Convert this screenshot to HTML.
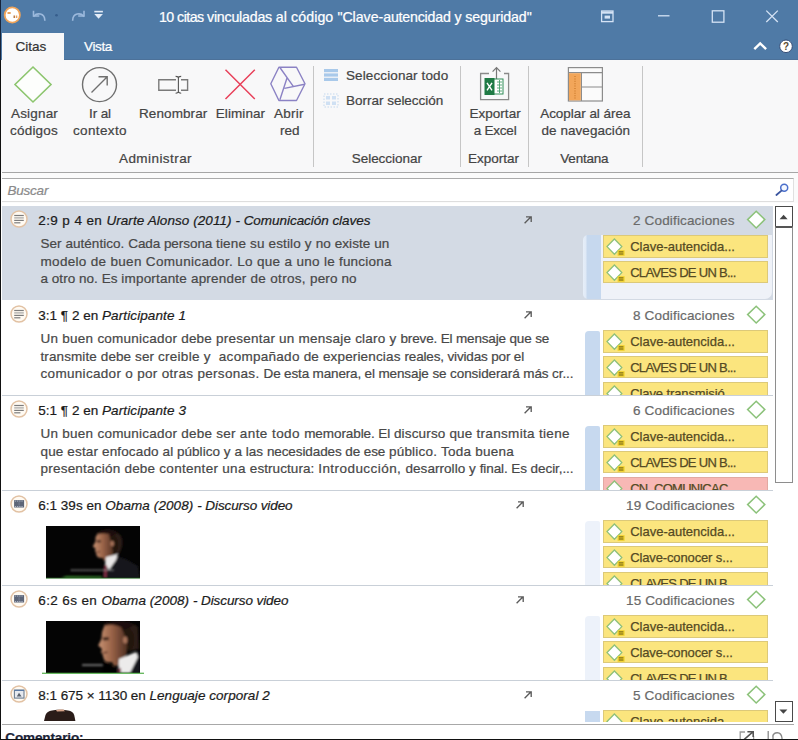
<!DOCTYPE html>
<html><head><meta charset="utf-8"><title>citas</title>
<style>
*{box-sizing:border-box;margin:0;padding:0}
html,body{width:798px;height:740px;overflow:hidden;background:#fff;font-family:"Liberation Sans",sans-serif;}
body{position:relative}
.a{position:absolute}
.t{position:absolute;white-space:pre;-webkit-text-stroke:0.22px currentColor}
svg{position:absolute;overflow:visible}
.sep{position:absolute;width:1.2px;background:#c6c6c6;top:66px;height:101px}
.tag{position:absolute;left:603px;width:165px;height:22.2px;background:#fbe57e;border:1px solid #dcc979;overflow:hidden}
.tag.red{background:#f8b8b5;border-color:#e2a9a2}
.tt{position:absolute;white-space:nowrap;-webkit-text-stroke:0.25px currentColor;font-size:13px;line-height:15px;color:#544a24;left:26.3px}
</style></head><body>

<div class="a" style="left:0;top:0;width:798px;height:60px;background:#4f7aa6"></div>
<div class="a" style="left:64px;top:59px;width:734px;height:1px;background:#4c7199"></div>
<div class="a" style="left:0;top:60px;width:798px;height:112px;background:#f8f8f9"></div>
<div class="a" style="left:2px;top:33px;width:62px;height:28px;background:#f8f8f9"></div>
<div class="a" style="left:0;top:0;width:1.2px;height:740px;background:#16233a"></div>
<div class="a" style="left:0;top:60px;width:1.3px;height:680px;background:#111"></div>
<!-- title bar icons -->
<svg style="left:0;top:0" width="798" height="60" viewBox="0 0 798 60">
  <circle cx="12.3" cy="15" r="7.6" fill="#fff" stroke="#f0a45a" stroke-width="1.8"/>
  <rect x="7.5" y="12" width="3.2" height="2" fill="#e9a25c"/>
  <rect x="13.5" y="15.5" width="1.5" height="2.5" fill="#b77a48"/>
  <rect x="15.8" y="15.5" width="1.5" height="2.5" fill="#e9a25c"/>
  <g fill="none" stroke="#9cb9dc" stroke-width="1.6" stroke-linecap="square">
    <path d="M33.5 11.5 V16 H38.5"/><path d="M34 16 C37 12.5 44.5 13 44.8 20"/>
    <path d="M84 11.5 V16 H79"/><path d="M83.5 16 C80.5 12.5 73 13 72.7 20"/>
  </g>
  <circle cx="56.5" cy="15.2" r="1.3" fill="#365d8c"/>
  <rect x="94.3" y="10.8" width="8.6" height="1.6" fill="#e3ecf7"/>
  <path d="M94.3 14 H102.9 L98.6 18.8 Z" fill="#e3ecf7"/>
  <!-- window controls -->
  <g fill="none" stroke="#d5e3f5" stroke-width="1.3">
    <rect x="601.6" y="11" width="11.4" height="10.6"/>
    <path d="M601.6 12.6 H613" stroke-width="2.2"/>
    <rect x="604.6" y="15.6" width="5.4" height="3" fill="#d5e3f5" stroke="none"/>
    <path d="M658 15.8 H669.5"/>
    <rect x="712.3" y="10.8" width="11.6" height="11.4"/>
    <path d="M766.3 10.6 L777.8 22 M777.8 10.6 L766.3 22"/>
  </g>
  <path d="M754.3 49.2 L760.2 43.4 L766.1 49.2" fill="none" stroke="#fff" stroke-width="2.4"/>
  <circle cx="786" cy="46.3" r="6.3" fill="#fff" stroke="#2c446e" stroke-width="0.9"/>
  <text x="786" y="50" font-family="Liberation Sans" font-weight="bold" font-size="10" text-anchor="middle" fill="#5a4a30">?</text>
</svg>
<!-- ribbon icons -->
<svg style="left:0;top:60px" width="798" height="112" viewBox="0 60 798 112">
  <!-- diamond -->
  <path d="M33 67 L51 84.5 L33 102 L15 84.5 Z" fill="#fdfefc" stroke="#8cc56e" stroke-width="1.6"/>
  <!-- circle arrow -->
  <circle cx="99.5" cy="84.6" r="17" fill="none" stroke="#6f6f6f" stroke-width="1.4"/>
  <path d="M91.5 92.5 L107 77 M98.5 76.8 H107.2 V85.5" fill="none" stroke="#6f6f6f" stroke-width="1.4"/>
  <!-- rename -->
  <g fill="none" stroke="#7a7a7a" stroke-width="1.4">
    <path d="M176 79.8 H158.8 V90.3 H176 M181 79.8 H187.6 V90.3 H181"/>
    <path d="M178.4 77 V92.6 M175.6 76.4 Q178.4 76.4 178.4 78 Q178.4 76.4 181.2 76.4 M175.6 93.2 Q178.4 93.2 178.4 91.6 Q178.4 93.2 181.2 93.2" stroke="#555" stroke-width="1.1"/>
  </g>
  <!-- X -->
  <path d="M225.5 69.8 L254.8 99 M254.8 69.8 L225.5 99" fill="none" stroke="#e8405a" stroke-width="1.5"/>
  <!-- hexagon -->
  <g fill="none" stroke="#8b82c4" stroke-width="1.4" stroke-linejoin="round">
    <path d="M270.8 83.8 L278.9 67.2 H296.5 L305 83.8 L296.5 100.5 H278.9 Z"/>
    <path d="M279.9 67.5 L293.1 86.1 M287 78 L279.9 99.8 M304.6 84.3 L284.5 88.4"/>
  </g>
  <!-- select all -->
  <rect x="324" y="69" width="14" height="3.2" fill="#a9c9ea"/>
  <rect x="324" y="73.4" width="14" height="3.2" fill="#a9c9ea"/>
  <rect x="324" y="77.8" width="14" height="3.2" fill="#a9c9ea"/>
  <!-- clear selection -->
  <g fill="#cfe0f3">
    <rect x="324" y="94" width="14" height="13" fill="none" stroke="#c4d8ee" stroke-width="1" stroke-dasharray="1.5 1.5"/>
    <rect x="326" y="96" width="4" height="3.5"/><rect x="332" y="96" width="4" height="3.5"/>
    <rect x="326" y="101.5" width="4" height="3.5"/><rect x="332" y="101.5" width="4" height="3.5"/>
  </g>
  <!-- excel -->
  <g>
    <path d="M489 73.5 H480.6 V99.6 H508.6 V73.5 H504" fill="none" stroke="#8a8a8a" stroke-width="1.3"/>
    <path d="M496.5 80 V68 M492.6 71.6 L496.5 67.6 L500.4 71.6" fill="none" stroke="#777" stroke-width="1.2"/>
    <rect x="493" y="79" width="10" height="15" fill="#fff" stroke="#2e8b57" stroke-width="1"/>
    <path d="M497 82 H502 M497 85 H502 M497 88 H502 M497 91 H502 M499.5 80 V93" stroke="#4aa06e" stroke-width="0.9"/>
    <rect x="484.5" y="78" width="10" height="17" fill="#1f7a45"/>
    <path d="M487 82.8 L492 90.4 M492 82.8 L487 90.4" stroke="#fff" stroke-width="1.4"/>
  </g>
  <!-- dock -->
  <g>
    <rect x="568.4" y="67.6" width="34" height="33.4" fill="#fbfbfb" stroke="#8c8c8c" stroke-width="1.2"/>
    <path d="M568.4 72.6 H602.4 M581.4 72.6 V101 M581.4 87 H602.4" stroke="#8c8c8c" stroke-width="1.2" fill="none"/>
    <rect x="569" y="73.2" width="11.8" height="27.2" fill="#f2a65a"/>
    <path d="M575 76 V99" stroke="#d98a3c" stroke-width="2" stroke-dasharray="1 1.4"/>
  </g>
</svg>

<div class="sep" style="left:312.5px"></div>
<div class="sep" style="left:459.5px"></div>
<div class="sep" style="left:528.2px"></div>
<div class="sep" style="left:641.7px"></div>
<div class="a" style="left:2px;top:171.6px;width:796px;height:1px;background:#a6a6a6"></div>
<div class="a" style="left:2px;top:172.6px;width:796px;height:30px;background:#fbfbfb"></div>
<div class="a" style="left:2px;top:177.8px;width:792px;height:24px;background:#fff;border-top:1.2px solid #ababab;border-right:1px solid #e0e0e0;border-bottom:1px solid #dedede"></div>
<div class="a" style="left:2px;top:206px;width:771px;height:94px;background:#d3dae4"></div>
<div class="a" style="left:2px;top:395px;width:771px;height:1px;background:#c9d0d8"></div>
<div class="a" style="left:2px;top:490px;width:771px;height:1px;background:#c9d0d8"></div>
<div class="a" style="left:2px;top:585px;width:771px;height:1px;background:#c9d0d8"></div>
<div class="a" style="left:2px;top:680px;width:771px;height:1px;background:#c9d0d8"></div>
<svg style="left:0;top:0" width="798" height="740" viewBox="0 0 798 740">
<circle cx="19" cy="219" r="8" fill="#fffaf2" stroke="#e2c2a4" stroke-width="1.5"/><g stroke="#7d7d7d" stroke-width="1.2"><path d="M14.2 215.5 H23.8"/><path d="M14.2 217.9 H23.8" stroke="#a5a5a5"/><path d="M14.2 220.4 H23.8"/><path d="M14.2 222.8 H20.4"/></g>
<path d="M756.2 211.2 L764.8000000000001 219.6 L756.2 228.0 L747.6 219.6 Z" fill="#fff" stroke="#8cc27a" stroke-width="1.5" stroke-linejoin="miter"/>
<circle cx="19" cy="314" r="8" fill="#fffaf2" stroke="#e2c2a4" stroke-width="1.5"/><g stroke="#7d7d7d" stroke-width="1.2"><path d="M14.2 310.5 H23.8"/><path d="M14.2 312.9 H23.8" stroke="#a5a5a5"/><path d="M14.2 315.4 H23.8"/><path d="M14.2 317.8 H20.4"/></g>
<path d="M756.2 306.20000000000005 L764.8000000000001 314.6 L756.2 323.0 L747.6 314.6 Z" fill="#fff" stroke="#8cc27a" stroke-width="1.5" stroke-linejoin="miter"/>
<circle cx="19" cy="409" r="8" fill="#fffaf2" stroke="#e2c2a4" stroke-width="1.5"/><g stroke="#7d7d7d" stroke-width="1.2"><path d="M14.2 405.5 H23.8"/><path d="M14.2 407.9 H23.8" stroke="#a5a5a5"/><path d="M14.2 410.4 H23.8"/><path d="M14.2 412.8 H20.4"/></g>
<path d="M756.2 401.20000000000005 L764.8000000000001 409.6 L756.2 418.0 L747.6 409.6 Z" fill="#fff" stroke="#8cc27a" stroke-width="1.5" stroke-linejoin="miter"/>
<circle cx="19" cy="504" r="8" fill="#fffaf2" stroke="#e2c2a4" stroke-width="1.5"/><rect x="14.1" y="500.1" width="10" height="7.4" fill="#5d6577"/><path d="M14.8 501.1 H23.6 M14.8 506.5 H23.6" stroke="#aab1c2" stroke-width="1" stroke-dasharray="1.3 0.9"/><path d="M19.1 502.2 V505.6" stroke="#7f879a" stroke-width="0.8"/>
<path d="M756.2 496.20000000000005 L764.8000000000001 504.6 L756.2 513.0 L747.6 504.6 Z" fill="#fff" stroke="#8cc27a" stroke-width="1.5" stroke-linejoin="miter"/>
<circle cx="19" cy="599" r="8" fill="#fffaf2" stroke="#e2c2a4" stroke-width="1.5"/><rect x="14.1" y="595.1" width="10" height="7.4" fill="#5d6577"/><path d="M14.8 596.1 H23.6 M14.8 601.5 H23.6" stroke="#aab1c2" stroke-width="1" stroke-dasharray="1.3 0.9"/><path d="M19.1 597.2 V600.6" stroke="#7f879a" stroke-width="0.8"/>
<path d="M756.2 591.2 L764.8000000000001 599.6 L756.2 608.0 L747.6 599.6 Z" fill="#fff" stroke="#8cc27a" stroke-width="1.5" stroke-linejoin="miter"/>
<circle cx="19" cy="694" r="8" fill="#fffaf2" stroke="#e2c2a4" stroke-width="1.5"/><rect x="14.4" y="690.1" width="9.6" height="8" fill="#e6e9ef" stroke="#6d7d90" stroke-width="1.1"/><path d="M14.4 690.4 H24" stroke="#5b7aa5" stroke-width="1.2"/><path d="M16.8 696.6 L19 692.8 L20.4 694.8 L21.6 696.6 Z" fill="#59606c"/>
<path d="M756.2 686.2 L764.8000000000001 694.6 L756.2 703.0 L747.6 694.6 Z" fill="#fff" stroke="#8cc27a" stroke-width="1.5" stroke-linejoin="miter"/>
<path d="M524.6 223.3 L530.8000000000001 217.10000000000002 M526.0 216.8 H531.2 V221.9" fill="none" stroke="#5c5c5c" stroke-width="1.35"/>
<path d="M524.6 318.3 L530.8000000000001 312.1 M526.0 311.8 H531.2 V316.90000000000003" fill="none" stroke="#5c5c5c" stroke-width="1.35"/>
<path d="M524.6 413.3 L530.8000000000001 407.1 M526.0 406.8 H531.2 V411.90000000000003" fill="none" stroke="#5c5c5c" stroke-width="1.35"/>
<path d="M516.6 508.3 L522.8000000000001 502.1 M518.0 501.8 H523.2 V506.90000000000003" fill="none" stroke="#5c5c5c" stroke-width="1.35"/>
<path d="M516.6 603.3 L522.8000000000001 597.0999999999999 M518.0 596.8 H523.2 V601.9" fill="none" stroke="#5c5c5c" stroke-width="1.35"/>
<path d="M524.6 698.3 L530.8000000000001 692.0999999999999 M526.0 691.8 H531.2 V696.9" fill="none" stroke="#5c5c5c" stroke-width="1.35"/>
</svg>
<div class="a" style="left:582.5px;top:235.4px;width:18.5px;height:64.1px;border-radius:5px 0 0 5px;background:linear-gradient(90deg,#e6eef8 0,#dfe9f6 3px,#c6d8ee 4px,#c6d8ee 100%)"></div>
<div class="a" style="left:601px;top:235.4px;width:171px;height:64.1px;background:#eff2f8;border-radius:0 0 7px 0"></div>
<div class="a" style="left:601px;top:235.4px;width:172px;height:64.1px;overflow:hidden">
<div class="tag" style="left:1.9px;top:0.0px"><div class="tt" style="top:2.6px;letter-spacing:0.0px">Clave-autencida...</div><svg style="left:0;top:0" width="26" height="22" viewBox="0 0 26 22"><path d="M10.4 3.0 L17.8 10.6 L10.4 18.2 L3.0 10.6 Z" fill="#fff" stroke="#8fc07a" stroke-width="1.3" stroke-linejoin="miter"/><rect x="13.6" y="14.2" width="7" height="5.6" fill="#f0d22a"/><path d="M14.8 15.9 H19.4 M14.8 18 H19.4" stroke="#6a5a18" stroke-width="1"/></svg></div>
<div class="tag" style="left:1.9px;top:25.9px"><div class="tt" style="top:2.6px;letter-spacing:-0.71px">CLAVES DE UN B...</div><svg style="left:0;top:0" width="26" height="22" viewBox="0 0 26 22"><path d="M10.4 3.0 L17.8 10.6 L10.4 18.2 L3.0 10.6 Z" fill="#fff" stroke="#8fc07a" stroke-width="1.3" stroke-linejoin="miter"/><rect x="13.6" y="14.2" width="7" height="5.6" fill="#f0d22a"/><path d="M14.8 15.9 H19.4 M14.8 18 H19.4" stroke="#6a5a18" stroke-width="1"/></svg></div>
</div>
<div class="a" style="left:584.8px;top:331.0px;width:15.6px;height:64.00000000000003px;border-radius:4px 2px 0 0;background:#c7d9ef"></div>
<div class="a" style="left:601px;top:330.4px;width:172px;height:64.60000000000002px;overflow:hidden">
<div class="tag" style="left:1.9px;top:0.0px"><div class="tt" style="top:2.6px;letter-spacing:0.0px">Clave-autencida...</div><svg style="left:0;top:0" width="26" height="22" viewBox="0 0 26 22"><path d="M10.4 3.0 L17.8 10.6 L10.4 18.2 L3.0 10.6 Z" fill="#fff" stroke="#8fc07a" stroke-width="1.3" stroke-linejoin="miter"/><rect x="13.6" y="14.2" width="7" height="5.6" fill="#f0d22a"/><path d="M14.8 15.9 H19.4 M14.8 18 H19.4" stroke="#6a5a18" stroke-width="1"/></svg></div>
<div class="tag" style="left:1.9px;top:25.9px"><div class="tt" style="top:2.6px;letter-spacing:-0.71px">CLAVES DE UN B...</div><svg style="left:0;top:0" width="26" height="22" viewBox="0 0 26 22"><path d="M10.4 3.0 L17.8 10.6 L10.4 18.2 L3.0 10.6 Z" fill="#fff" stroke="#8fc07a" stroke-width="1.3" stroke-linejoin="miter"/><rect x="13.6" y="14.2" width="7" height="5.6" fill="#f0d22a"/><path d="M14.8 15.9 H19.4 M14.8 18 H19.4" stroke="#6a5a18" stroke-width="1"/></svg></div>
<div class="tag" style="left:1.9px;top:51.8px"><div class="tt" style="top:2.6px;letter-spacing:-0.1px">Clave transmisió...</div><svg style="left:0;top:0" width="26" height="22" viewBox="0 0 26 22"><path d="M10.4 3.0 L17.8 10.6 L10.4 18.2 L3.0 10.6 Z" fill="#fff" stroke="#8fc07a" stroke-width="1.3" stroke-linejoin="miter"/><rect x="13.6" y="14.2" width="7" height="5.6" fill="#f0d22a"/><path d="M14.8 15.9 H19.4 M14.8 18 H19.4" stroke="#6a5a18" stroke-width="1"/></svg></div>
</div>
<div class="a" style="left:584.8px;top:426.0px;width:15.6px;height:64.00000000000003px;border-radius:4px 2px 0 0;background:#c7d9ef"></div>
<div class="a" style="left:601px;top:425.4px;width:172px;height:64.60000000000002px;overflow:hidden">
<div class="tag" style="left:1.9px;top:0.0px"><div class="tt" style="top:2.6px;letter-spacing:0.0px">Clave-autencida...</div><svg style="left:0;top:0" width="26" height="22" viewBox="0 0 26 22"><path d="M10.4 3.0 L17.8 10.6 L10.4 18.2 L3.0 10.6 Z" fill="#fff" stroke="#8fc07a" stroke-width="1.3" stroke-linejoin="miter"/><rect x="13.6" y="14.2" width="7" height="5.6" fill="#f0d22a"/><path d="M14.8 15.9 H19.4 M14.8 18 H19.4" stroke="#6a5a18" stroke-width="1"/></svg></div>
<div class="tag" style="left:1.9px;top:25.9px"><div class="tt" style="top:2.6px;letter-spacing:-0.71px">CLAVES DE UN B...</div><svg style="left:0;top:0" width="26" height="22" viewBox="0 0 26 22"><path d="M10.4 3.0 L17.8 10.6 L10.4 18.2 L3.0 10.6 Z" fill="#fff" stroke="#8fc07a" stroke-width="1.3" stroke-linejoin="miter"/><rect x="13.6" y="14.2" width="7" height="5.6" fill="#f0d22a"/><path d="M14.8 15.9 H19.4 M14.8 18 H19.4" stroke="#6a5a18" stroke-width="1"/></svg></div>
<div class="tag red" style="left:1.9px;top:51.8px"><div class="tt" style="top:2.6px;letter-spacing:-0.73px">CN_COMUNICAC...</div><svg style="left:0;top:0" width="26" height="22" viewBox="0 0 26 22"><path d="M10.4 3.0 L17.8 10.6 L10.4 18.2 L3.0 10.6 Z" fill="#fff" stroke="#8fc07a" stroke-width="1.3" stroke-linejoin="miter"/><rect x="13.6" y="14.2" width="7" height="5.6" fill="#f0d22a"/><path d="M14.8 15.9 H19.4 M14.8 18 H19.4" stroke="#6a5a18" stroke-width="1"/></svg></div>
</div>
<div class="a" style="left:584.8px;top:521.0px;width:15.6px;height:64.00000000000003px;border-radius:4px 2px 0 0;background:#edf2fa"></div>
<div class="a" style="left:601px;top:520.4px;width:172px;height:64.60000000000002px;overflow:hidden">
<div class="tag" style="left:1.9px;top:0.0px"><div class="tt" style="top:2.6px;letter-spacing:0.0px">Clave-autencida...</div><svg style="left:0;top:0" width="26" height="22" viewBox="0 0 26 22"><path d="M10.4 3.0 L17.8 10.6 L10.4 18.2 L3.0 10.6 Z" fill="#fff" stroke="#8fc07a" stroke-width="1.3" stroke-linejoin="miter"/><rect x="13.6" y="14.2" width="7" height="5.6" fill="#f0d22a"/><path d="M14.8 15.9 H19.4 M14.8 18 H19.4" stroke="#6a5a18" stroke-width="1"/></svg></div>
<div class="tag" style="left:1.9px;top:25.9px"><div class="tt" style="top:2.6px;letter-spacing:-0.13px">Clave-conocer s...</div><svg style="left:0;top:0" width="26" height="22" viewBox="0 0 26 22"><path d="M10.4 3.0 L17.8 10.6 L10.4 18.2 L3.0 10.6 Z" fill="#fff" stroke="#8fc07a" stroke-width="1.3" stroke-linejoin="miter"/><rect x="13.6" y="14.2" width="7" height="5.6" fill="#f0d22a"/><path d="M14.8 15.9 H19.4 M14.8 18 H19.4" stroke="#6a5a18" stroke-width="1"/></svg></div>
<div class="tag" style="left:1.9px;top:51.8px"><div class="tt" style="top:2.6px;letter-spacing:-0.71px">CLAVES DE UN B...</div><svg style="left:0;top:0" width="26" height="22" viewBox="0 0 26 22"><path d="M10.4 3.0 L17.8 10.6 L10.4 18.2 L3.0 10.6 Z" fill="#fff" stroke="#8fc07a" stroke-width="1.3" stroke-linejoin="miter"/><rect x="13.6" y="14.2" width="7" height="5.6" fill="#f0d22a"/><path d="M14.8 15.9 H19.4 M14.8 18 H19.4" stroke="#6a5a18" stroke-width="1"/></svg></div>
</div>
<div class="a" style="left:584.8px;top:616.0px;width:15.6px;height:64.00000000000003px;border-radius:4px 2px 0 0;background:#edf2fa"></div>
<div class="a" style="left:601px;top:615.4px;width:172px;height:64.60000000000002px;overflow:hidden">
<div class="tag" style="left:1.9px;top:0.0px"><div class="tt" style="top:2.6px;letter-spacing:0.0px">Clave-autencida...</div><svg style="left:0;top:0" width="26" height="22" viewBox="0 0 26 22"><path d="M10.4 3.0 L17.8 10.6 L10.4 18.2 L3.0 10.6 Z" fill="#fff" stroke="#8fc07a" stroke-width="1.3" stroke-linejoin="miter"/><rect x="13.6" y="14.2" width="7" height="5.6" fill="#f0d22a"/><path d="M14.8 15.9 H19.4 M14.8 18 H19.4" stroke="#6a5a18" stroke-width="1"/></svg></div>
<div class="tag" style="left:1.9px;top:25.9px"><div class="tt" style="top:2.6px;letter-spacing:-0.13px">Clave-conocer s...</div><svg style="left:0;top:0" width="26" height="22" viewBox="0 0 26 22"><path d="M10.4 3.0 L17.8 10.6 L10.4 18.2 L3.0 10.6 Z" fill="#fff" stroke="#8fc07a" stroke-width="1.3" stroke-linejoin="miter"/><rect x="13.6" y="14.2" width="7" height="5.6" fill="#f0d22a"/><path d="M14.8 15.9 H19.4 M14.8 18 H19.4" stroke="#6a5a18" stroke-width="1"/></svg></div>
<div class="tag" style="left:1.9px;top:51.8px"><div class="tt" style="top:2.6px;letter-spacing:-0.71px">CLAVES DE UN B...</div><svg style="left:0;top:0" width="26" height="22" viewBox="0 0 26 22"><path d="M10.4 3.0 L17.8 10.6 L10.4 18.2 L3.0 10.6 Z" fill="#fff" stroke="#8fc07a" stroke-width="1.3" stroke-linejoin="miter"/><rect x="13.6" y="14.2" width="7" height="5.6" fill="#f0d22a"/><path d="M14.8 15.9 H19.4 M14.8 18 H19.4" stroke="#6a5a18" stroke-width="1"/></svg></div>
</div>
<div class="a" style="left:584.8px;top:711.0px;width:15.6px;height:11.000000000000023px;border-radius:0;background:#c7d9ef"></div>
<div class="a" style="left:601px;top:710.4px;width:172px;height:11.600000000000023px;overflow:hidden">
<div class="tag" style="left:1.9px;top:0.0px"><div class="tt" style="top:2.6px;letter-spacing:0.0px">Clave-autencida...</div><svg style="left:0;top:0" width="26" height="22" viewBox="0 0 26 22"><path d="M10.4 3.0 L17.8 10.6 L10.4 18.2 L3.0 10.6 Z" fill="#fff" stroke="#8fc07a" stroke-width="1.3" stroke-linejoin="miter"/><rect x="13.6" y="14.2" width="7" height="5.6" fill="#f0d22a"/><path d="M14.8 15.9 H19.4 M14.8 18 H19.4" stroke="#6a5a18" stroke-width="1"/></svg></div>
</div>
<svg style="left:42px;top:525.5px;overflow:hidden" width="102" height="54" viewBox="-4 0 102 54"><defs><filter id="bl1" filterUnits="userSpaceOnUse" x="-4" y="-2" width="102" height="58"><feGaussianBlur stdDeviation="1"/></filter><linearGradient id="sk1" x1="0" x2="1" y1="0" y2="0"><stop offset="0" stop-color="#c99374"/><stop offset="0.45" stop-color="#9a6448"/><stop offset="1" stop-color="#4a2c20"/></linearGradient><clipPath id="cp1"><rect width="94" height="52"/></clipPath></defs><rect width="94" height="52" fill="#040404"/><g clip-path="url(#cp1)"><g filter="url(#bl1)"><path d="M70 30 L80 33 L92 40 L94 52 L56 52 L58 40 Z" fill="#15151a"/><path d="M52 7 C58 3 70 3 75 10 C78 16 76 23 73 28 L66 30 L62 14 Z" fill="#2a1a14"/><path d="M52 7 C56 5 63 6 66 10 L69 18 L68 26 L64 34 L58 35 L57 32 C53 32.5 51 31 50.5 29 L50 26.5 L49 24.5 L49.6 22.5 L46.8 20.5 L49.5 15.5 L49.6 11 Z" fill="url(#sk1)"/><path d="M63 9 C68 8 72 12 72 18 C72 23 70 27 68 30 C66 26 67 20 65 16 Z" fill="#24160f"/><ellipse cx="66.2" cy="17.5" rx="1.8" ry="2.8" fill="#a8735a"/><path d="M50.5 14.2 L54.5 14 L55 16.2 L51 16.4 Z" fill="#3a2018"/><path d="M50.6 25.4 L54 25 L54 26.2 L51 26.6 Z" fill="#5a3024"/><path d="M51 6.5 C57 2 68 2.5 72 7 L66 10 C62 7 56 7 52 8.5 Z" fill="#1c110c"/><path d="M60 31 L72 28 L70 34 L63 44 L59 38 Z" fill="#e8e6e6"/><path d="M58.4 39 L60.8 39 L60.4 52 L58.2 52 Z" fill="#8e3348"/></g><g filter="url(#bl1)"><path d="M25 44.2 H68" stroke="#b0b0b0" stroke-width="1.5" stroke-dasharray="2.2 0.9" opacity="0.8"/><path d="M15 52 L20 50.2 L56 50.6 L56 52 Z" fill="#3c9a32"/></g></g><rect x="0" y="51.7" width="94" height="0.9" fill="#2f6f2a"/></svg>
<svg style="left:42px;top:620.5px;overflow:hidden" width="102" height="54" viewBox="-4 0 102 54"><defs><filter id="bl2" filterUnits="userSpaceOnUse" x="-4" y="-2" width="102" height="58"><feGaussianBlur stdDeviation="1"/></filter><linearGradient id="sk2" x1="0" x2="1" y1="0" y2="0"><stop offset="0" stop-color="#c99374"/><stop offset="0.45" stop-color="#9a6448"/><stop offset="1" stop-color="#4a2c20"/></linearGradient><clipPath id="cp2"><rect width="94" height="52"/></clipPath></defs><rect width="94" height="52" fill="#040404"/><g clip-path="url(#cp2)"><g filter="url(#bl2)"><path d="M86 34 L94 30 L94 52 L80 52 Z" fill="#15151a"/><path d="M59 3 C66 -1 84 -1 92 6 L93 28 L84 30 L78 12 Z" fill="#2b1a13"/><path d="M59 3 C64 1 74 3 78 8 L82 20 L81 32 L76 44 L68 45 L66 41 C61 42 58 40 57.5 37 L56.6 33.5 L55 31 L56 28 L52.2 24.5 L55.4 18 L56 11 Z" fill="url(#sk2)"/><path d="M75 6 C82 5 88 10 88 18 C88 24 86 28 84 31 C81 27 81 20 79 15 Z" fill="#24160f"/><ellipse cx="79.2" cy="19" rx="2.2" ry="3.6" fill="#a8735a"/><path d="M56.5 16.4 L62.5 16 L63 19 L57.4 19.4 Z" fill="#3a2018"/><path d="M56.4 31.2 L61.5 30.4 L61.5 32 L57 32.6 Z" fill="#5a3024"/><path d="M58 2.5 C66 -2 82 -1 88 4 L79 9 C74 4 64 3 59 5 Z" fill="#1c110c"/><path d="M73 38 L90 31 L92 36 L84 52 L72 52 Z" fill="#ecebeb"/><path d="M72 47 L75 47 L75 52 L72 52 Z" fill="#7a4050"/><path d="M58 40 C62 44 70 46 72 52 L56 52 Z" fill="#050505"/></g><g filter="url(#bl2)"><path d="M36.5 44.2 H56.5" stroke="#c4c4c4" stroke-width="1.7" stroke-dasharray="2.2 0.8" opacity="0.85"/></g></g><rect x="-4" y="51.7" width="102" height="1.1" fill="#46a83c"/></svg>
<svg style="left:43px;top:709px" width="34" height="13" viewBox="0 0 34 13"><path d="M1 12 L2.5 6 Q4 2.5 9 1.6 L14 0.8 L20 0.8 L25 1.6 Q30 2.5 31.2 6 L32.4 12 Z" fill="#2a1c18"/><path d="M13 1.2 L16 0.4 L20.4 0.6 L22 2.2 L14 2.6 Z" fill="#d9a58a"/></svg>
<div class="a" style="left:774.5px;top:206px;width:18px;height:21px;background:#fff;border:1.6px solid #4a4a4a"></div>
<div class="a" style="left:774.5px;top:226px;width:18px;height:257px;background:#fff;border:1.8px solid #8e8e8e;border-top:2px solid #555"></div>
<div class="a" style="left:774.5px;top:700.5px;width:18px;height:21px;background:#fff;border:1.6px solid #4a4a4a"></div>
<svg style="left:774px;top:200px" width="20" height="530" viewBox="774 200 20 530"><path d="M779.6 219.2 L783.6 214.8 L787.6 219.2 Z" fill="#444"/><path d="M779.4 709.4 L783.4 713.8 L787.4 709.4 Z" fill="#444"/></svg>
<div class="a" style="left:2px;top:722px;width:796px;height:18px;background:#fff"></div>
<div class="a" style="left:2px;top:723.6px;width:792px;height:1px;background:#a8a8a8"></div>
<!-- search icon -->
<svg style="left:770px;top:180px" width="24" height="20" viewBox="770 180 24 20">
  <circle cx="784.2" cy="187.8" r="3.5" fill="#f4f8ff" stroke="#4a6fcb" stroke-width="1.5"/>
  <path d="M781.5 190.6 L776.4 195" stroke="#3a559f" stroke-width="1.8" stroke-linecap="round"/>
</svg>
<svg style="left:730px;top:728px" width="64" height="12" viewBox="730 728 64 12">
  <path d="M745 732 H740.2 V740 M753.6 736 V740" fill="none" stroke="#9a9a9a" stroke-width="1.3"/>
  <path d="M743.5 740 L752.6 732.2 M747.4 731.8 H753.2 V737" fill="none" stroke="#555" stroke-width="1.6"/>
  <path d="M768.2 731 V740" stroke="#8a8a8a" stroke-width="1.3"/>
  <path d="M773 734.5 V740 M772.6 736.6 C774 731.5 781 731 782 738 V740" fill="none" stroke="#8a8a8a" stroke-width="1.3"/>
</svg>

<div class="t" id="t0" style="left:159px;top:9.68px;font-size:14.2px;line-height:14.2px;color:#fff;letter-spacing:-0.538px;">10 citas </div>
<div class="t" id="t1" style="left:207px;top:9.68px;font-size:14.2px;line-height:14.2px;color:#fff;letter-spacing:-0.208px;">vinculadas </div>
<div class="t" id="t2" style="left:275.7px;top:9.68px;font-size:14.2px;line-height:14.2px;color:#fff;letter-spacing:0.097px;">al código </div>
<div class="t" id="t3" style="left:337.4px;top:9.68px;font-size:14.2px;line-height:14.2px;color:#fff;letter-spacing:-0.035px;">"Clave-</div>
<div class="t" id="t4" style="left:383.2px;top:9.68px;font-size:14.2px;line-height:14.2px;color:#fff;letter-spacing:-0.198px;">autencidad </div>
<div class="t" id="t5" style="left:454.4px;top:9.68px;font-size:14.2px;line-height:14.2px;color:#fff;letter-spacing:-0.099px;">y seguridad"</div>
<div class="t" id="t6" style="left:15.5px;top:39.97px;font-size:13.5px;line-height:13.5px;color:#333;letter-spacing:0.027px;">Citas</div>
<div class="t" id="t7" style="left:84px;top:39.97px;font-size:13.5px;line-height:13.5px;color:#fff;letter-spacing:-0.356px;">Vista</div>
<div class="t" id="t8" style="left:11px;top:106.57px;font-size:13.5px;line-height:13.5px;color:#444;letter-spacing:0.174px;">Asignar</div>
<div class="t" id="t9" style="left:10px;top:123.57px;font-size:13.5px;line-height:13.5px;color:#444;letter-spacing:0.208px;">códigos</div>
<div class="t" id="t10" style="left:89px;top:106.57px;font-size:13.5px;line-height:13.5px;color:#444;letter-spacing:-0.103px;">Ir al</div>
<div class="t" id="t11" style="left:73px;top:123.57px;font-size:13.5px;line-height:13.5px;color:#444;letter-spacing:0.369px;">contexto</div>
<div class="t" id="t12" style="left:139px;top:106.57px;font-size:13.5px;line-height:13.5px;color:#444;letter-spacing:0.097px;">Renombrar</div>
<div class="t" id="t13" style="left:215.7px;top:106.57px;font-size:13.5px;line-height:13.5px;color:#444;letter-spacing:0.092px;">Eliminar</div>
<div class="t" id="t14" style="left:274px;top:106.57px;font-size:13.5px;line-height:13.5px;color:#444;letter-spacing:0.257px;">Abrir</div>
<div class="t" id="t15" style="left:280px;top:123.57px;font-size:13.5px;line-height:13.5px;color:#444;letter-spacing:-0.005px;">red</div>
<div class="t" id="t16" style="left:119px;top:151.57px;font-size:13.5px;line-height:13.5px;color:#444;letter-spacing:0.430px;">Administrar</div>
<div class="t" id="t17" style="left:346px;top:68.57px;font-size:13.5px;line-height:13.5px;color:#444;letter-spacing:0.108px;">Seleccionar todo</div>
<div class="t" id="t18" style="left:346px;top:93.57px;font-size:13.5px;line-height:13.5px;color:#444;letter-spacing:-0.015px;">Borrar selección</div>
<div class="t" id="t19" style="left:351.7px;top:151.57px;font-size:13.5px;line-height:13.5px;color:#444;letter-spacing:-0.022px;">Seleccionar</div>
<div class="t" id="t20" style="left:469.5px;top:106.57px;font-size:13.5px;line-height:13.5px;color:#444;letter-spacing:0.021px;">Exportar</div>
<div class="t" id="t21" style="left:473.8px;top:123.57px;font-size:13.5px;line-height:13.5px;color:#444;letter-spacing:-0.240px;">a Excel</div>
<div class="t" id="t22" style="left:468px;top:151.57px;font-size:13.5px;line-height:13.5px;color:#444;letter-spacing:-0.004px;">Exportar</div>
<div class="t" id="t23" style="left:540.2px;top:106.57px;font-size:13.5px;line-height:13.5px;color:#444;letter-spacing:-0.041px;">Acoplar al área</div>
<div class="t" id="t24" style="left:541.5px;top:123.57px;font-size:13.5px;line-height:13.5px;color:#444;letter-spacing:0.052px;">de navegación</div>
<div class="t" id="t25" style="left:560.3px;top:151.57px;font-size:13.5px;line-height:13.5px;color:#444;letter-spacing:-0.209px;">Ventana</div>
<div class="t" id="t26" style="left:7.5px;top:183.57px;font-size:13.5px;line-height:13.5px;color:#8a8a8a;letter-spacing:-0.222px;font-style:italic;">Buscar</div>
<div class="t" id="t27" style="left:38.3px;top:213.87px;font-size:13.5px;line-height:13.5px;color:#1c1c1c;letter-spacing:0.390px;">2:9 p 4 en </div>
<div class="t" id="t28" style="left:106.4px;top:213.87px;font-size:13.5px;line-height:13.5px;color:#1c1c1c;letter-spacing:0.073px;"><i>Urarte Alonso (2011) </i></div>
<div class="t" id="t29" style="left:235.5px;top:213.87px;font-size:13.5px;line-height:13.5px;color:#1c1c1c;letter-spacing:-0.043px;"><i>- Comunicación claves</i></div>
<div class="t" id="t30" style="left:633.0px;top:214.37px;font-size:13.5px;line-height:13.5px;color:#6a6a6a;letter-spacing:0.159px;">2 Codificaciones</div>
<div class="t" id="t31" style="left:38.3px;top:308.87px;font-size:13.5px;line-height:13.5px;color:#1c1c1c;letter-spacing:0.014px;">3:1 ¶ 2 en </div>
<div class="t" id="t32" style="left:102px;top:308.87px;font-size:13.5px;line-height:13.5px;color:#1c1c1c;letter-spacing:0.103px;"><i>Participante 1</i></div>
<div class="t" id="t33" style="left:633.0px;top:309.37px;font-size:13.5px;line-height:13.5px;color:#6a6a6a;letter-spacing:0.159px;">8 Codificaciones</div>
<div class="t" id="t34" style="left:38.3px;top:403.87px;font-size:13.5px;line-height:13.5px;color:#1c1c1c;letter-spacing:0.014px;">5:1 ¶ 2 en </div>
<div class="t" id="t35" style="left:102px;top:403.87px;font-size:13.5px;line-height:13.5px;color:#1c1c1c;letter-spacing:0.103px;"><i>Participante 3</i></div>
<div class="t" id="t36" style="left:633.0px;top:404.37px;font-size:13.5px;line-height:13.5px;color:#6a6a6a;letter-spacing:0.159px;">6 Codificaciones</div>
<div class="t" id="t37" style="left:38.3px;top:498.87px;font-size:13.5px;line-height:13.5px;color:#1c1c1c;letter-spacing:0.008px;">6:1 39s en </div>
<div class="t" id="t38" style="left:105.2px;top:498.87px;font-size:13.5px;line-height:13.5px;color:#1c1c1c;letter-spacing:0.100px;"><i>Obama (2008) </i></div>
<div class="t" id="t39" style="left:197.3px;top:498.87px;font-size:13.5px;line-height:13.5px;color:#1c1c1c;letter-spacing:-0.099px;"><i>- Discurso video</i></div>
<div class="t" id="t40" style="left:626.1px;top:499.37px;font-size:13.5px;line-height:13.5px;color:#6a6a6a;letter-spacing:0.113px;">19 Codificaciones</div>
<div class="t" id="t41" style="left:38.3px;top:593.87px;font-size:13.5px;line-height:13.5px;color:#1c1c1c;letter-spacing:0.380px;">6:2 6s en </div>
<div class="t" id="t42" style="left:101.4px;top:593.87px;font-size:13.5px;line-height:13.5px;color:#1c1c1c;letter-spacing:0.062px;"><i>Obama (2008) </i></div>
<div class="t" id="t43" style="left:193px;top:593.87px;font-size:13.5px;line-height:13.5px;color:#1c1c1c;letter-spacing:-0.093px;"><i>- Discurso video</i></div>
<div class="t" id="t44" style="left:626.1px;top:594.37px;font-size:13.5px;line-height:13.5px;color:#6a6a6a;letter-spacing:0.113px;">15 Codificaciones</div>
<div class="t" id="t45" style="left:38.3px;top:688.87px;font-size:13.5px;line-height:13.5px;color:#1c1c1c;letter-spacing:-0.044px;">8:1 675 × 1130 en </div>
<div class="t" id="t46" style="left:149.5px;top:688.87px;font-size:13.5px;line-height:13.5px;color:#1c1c1c;letter-spacing:0.050px;"><i>Lenguaje corporal 2</i></div>
<div class="t" id="t47" style="left:633.0px;top:689.37px;font-size:13.5px;line-height:13.5px;color:#6a6a6a;letter-spacing:0.159px;">5 Codificaciones</div>
<div class="t" id="t48" style="left:40.5px;top:237.07px;font-size:13.5px;line-height:13.5px;color:#484848;letter-spacing:0.042px;">Ser auténtico. </div>
<div class="t" id="t49" style="left:128.2px;top:237.07px;font-size:13.5px;line-height:13.5px;color:#484848;letter-spacing:-0.059px;">Cada persona </div>
<div class="t" id="t50" style="left:216px;top:237.07px;font-size:13.5px;line-height:13.5px;color:#484848;letter-spacing:0.160px;">tiene su estilo y </div>
<div class="t" id="t51" style="left:315.7px;top:237.07px;font-size:13.5px;line-height:13.5px;color:#484848;letter-spacing:0.074px;">no existe un</div>
<div class="t" id="t52" style="left:40.5px;top:255.07px;font-size:13.5px;line-height:13.5px;color:#484848;letter-spacing:0.315px;">modelo de buen </div>
<div class="t" id="t53" style="left:145.8px;top:255.07px;font-size:13.5px;line-height:13.5px;color:#484848;letter-spacing:0.330px;">Comunicador. Lo que a uno </div>
<div class="t" id="t54" style="left:324px;top:255.07px;font-size:13.5px;line-height:13.5px;color:#484848;letter-spacing:0.217px;">le funciona</div>
<div class="t" id="t55" style="left:40.5px;top:272.17px;font-size:13.5px;line-height:13.5px;color:#484848;letter-spacing:0.036px;">a otro no. Es </div>
<div class="t" id="t56" style="left:121.3px;top:272.17px;font-size:13.5px;line-height:13.5px;color:#484848;letter-spacing:0.194px;">importante aprender </div>
<div class="t" id="t57" style="left:250.5px;top:272.17px;font-size:13.5px;line-height:13.5px;color:#484848;letter-spacing:0.322px;">de otros, </div>
<div class="t" id="t58" style="left:310px;top:272.17px;font-size:13.5px;line-height:13.5px;color:#484848;letter-spacing:0.129px;">pero no</div>
<div class="t" id="t59" style="left:40.5px;top:332.07px;font-size:13.5px;line-height:13.5px;color:#484848;letter-spacing:0.263px;">Un buen </div>
<div class="t" id="t60" style="left:97.4px;top:332.07px;font-size:13.5px;line-height:13.5px;color:#484848;letter-spacing:0.226px;">comunicador debe presentar </div>
<div class="t" id="t61" style="left:279.1px;top:332.07px;font-size:13.5px;line-height:13.5px;color:#484848;letter-spacing:0.228px;">un mensaje claro y </div>
<div class="t" id="t62" style="left:400.5px;top:332.07px;font-size:13.5px;line-height:13.5px;color:#484848;letter-spacing:-0.156px;">breve. El mensaje que se</div>
<div class="t" id="t63" style="left:40.5px;top:350.07px;font-size:13.5px;line-height:13.5px;color:#484848;letter-spacing:0.102px;">transmite debe ser </div>
<div class="t" id="t64" style="left:158px;top:350.07px;font-size:13.5px;line-height:13.5px;color:#484848;letter-spacing:0.278px;">creible y  acompañado </div>
<div class="t" id="t65" style="left:303.7px;top:350.07px;font-size:13.5px;line-height:13.5px;color:#484848;letter-spacing:0.155px;">de experiencias </div>
<div class="t" id="t66" style="left:404.5px;top:350.07px;font-size:13.5px;line-height:13.5px;color:#484848;letter-spacing:-0.162px;">reales, vividas por el</div>
<div class="t" id="t67" style="left:40.5px;top:367.17px;font-size:13.5px;line-height:13.5px;color:#484848;letter-spacing:0.315px;">comunicador o por otras personas. </div>
<div class="t" id="t68" style="left:263.6px;top:367.17px;font-size:13.5px;line-height:13.5px;color:#484848;letter-spacing:-0.159px;">De esta manera, el </div>
<div class="t" id="t69" style="left:378.4px;top:367.17px;font-size:13.5px;line-height:13.5px;color:#484848;letter-spacing:-0.097px;">mensaje se considerará más cr...</div>
<div class="t" id="t70" style="left:40.5px;top:427.07px;font-size:13.5px;line-height:13.5px;color:#484848;letter-spacing:0.263px;">Un buen </div>
<div class="t" id="t71" style="left:97.4px;top:427.07px;font-size:13.5px;line-height:13.5px;color:#484848;letter-spacing:0.242px;">comunicador debe ser </div>
<div class="t" id="t72" style="left:239.8px;top:427.07px;font-size:13.5px;line-height:13.5px;color:#484848;letter-spacing:0.434px;">ante todo </div>
<div class="t" id="t73" style="left:304.2px;top:427.07px;font-size:13.5px;line-height:13.5px;color:#484848;letter-spacing:-0.078px;">memorable. El </div>
<div class="t" id="t74" style="left:393.9px;top:427.07px;font-size:13.5px;line-height:13.5px;color:#484848;letter-spacing:0.169px;">discurso que </div>
<div class="t" id="t75" style="left:476.4px;top:427.07px;font-size:13.5px;line-height:13.5px;color:#484848;letter-spacing:0.330px;">transmita tiene</div>
<div class="t" id="t76" style="left:40.5px;top:445.07px;font-size:13.5px;line-height:13.5px;color:#484848;letter-spacing:0.145px;">que estar enfocado </div>
<div class="t" id="t77" style="left:162.6px;top:445.07px;font-size:13.5px;line-height:13.5px;color:#484848;letter-spacing:0.039px;">al público y a las </div>
<div class="t" id="t78" style="left:266.9px;top:445.07px;font-size:13.5px;line-height:13.5px;color:#484848;letter-spacing:-0.097px;">necesidades de ese </div>
<div class="t" id="t79" style="left:388.9px;top:445.07px;font-size:13.5px;line-height:13.5px;color:#484848;letter-spacing:0.236px;">público. Toda buena</div>
<div class="t" id="t80" style="left:40.5px;top:462.17px;font-size:13.5px;line-height:13.5px;color:#484848;letter-spacing:0.220px;">presentación debe </div>
<div class="t" id="t81" style="left:159.3px;top:462.17px;font-size:13.5px;line-height:13.5px;color:#484848;letter-spacing:0.298px;">contenter una </div>
<div class="t" id="t82" style="left:249.8px;top:462.17px;font-size:13.5px;line-height:13.5px;color:#484848;letter-spacing:0.072px;">estructura: </div>
<div class="t" id="t83" style="left:318.2px;top:462.17px;font-size:13.5px;line-height:13.5px;color:#484848;letter-spacing:0.447px;">Introducción, </div>
<div class="t" id="t84" style="left:405.5px;top:462.17px;font-size:13.5px;line-height:13.5px;color:#484848;letter-spacing:0.050px;">desarrollo y </div>
<div class="t" id="t85" style="left:479.7px;top:462.17px;font-size:13.5px;line-height:13.5px;color:#484848;letter-spacing:-0.084px;">final. Es decir,...</div>
<div class="t" id="t86" style="left:5.3px;top:730.57px;font-size:13.5px;line-height:13.5px;color:#1a2438;letter-spacing:-0.120px;font-weight:bold;">Comentario:</div>
<div class="a" style="left:0;top:738.5px;width:798px;height:1.5px;background:#111"></div>
</body></html>
